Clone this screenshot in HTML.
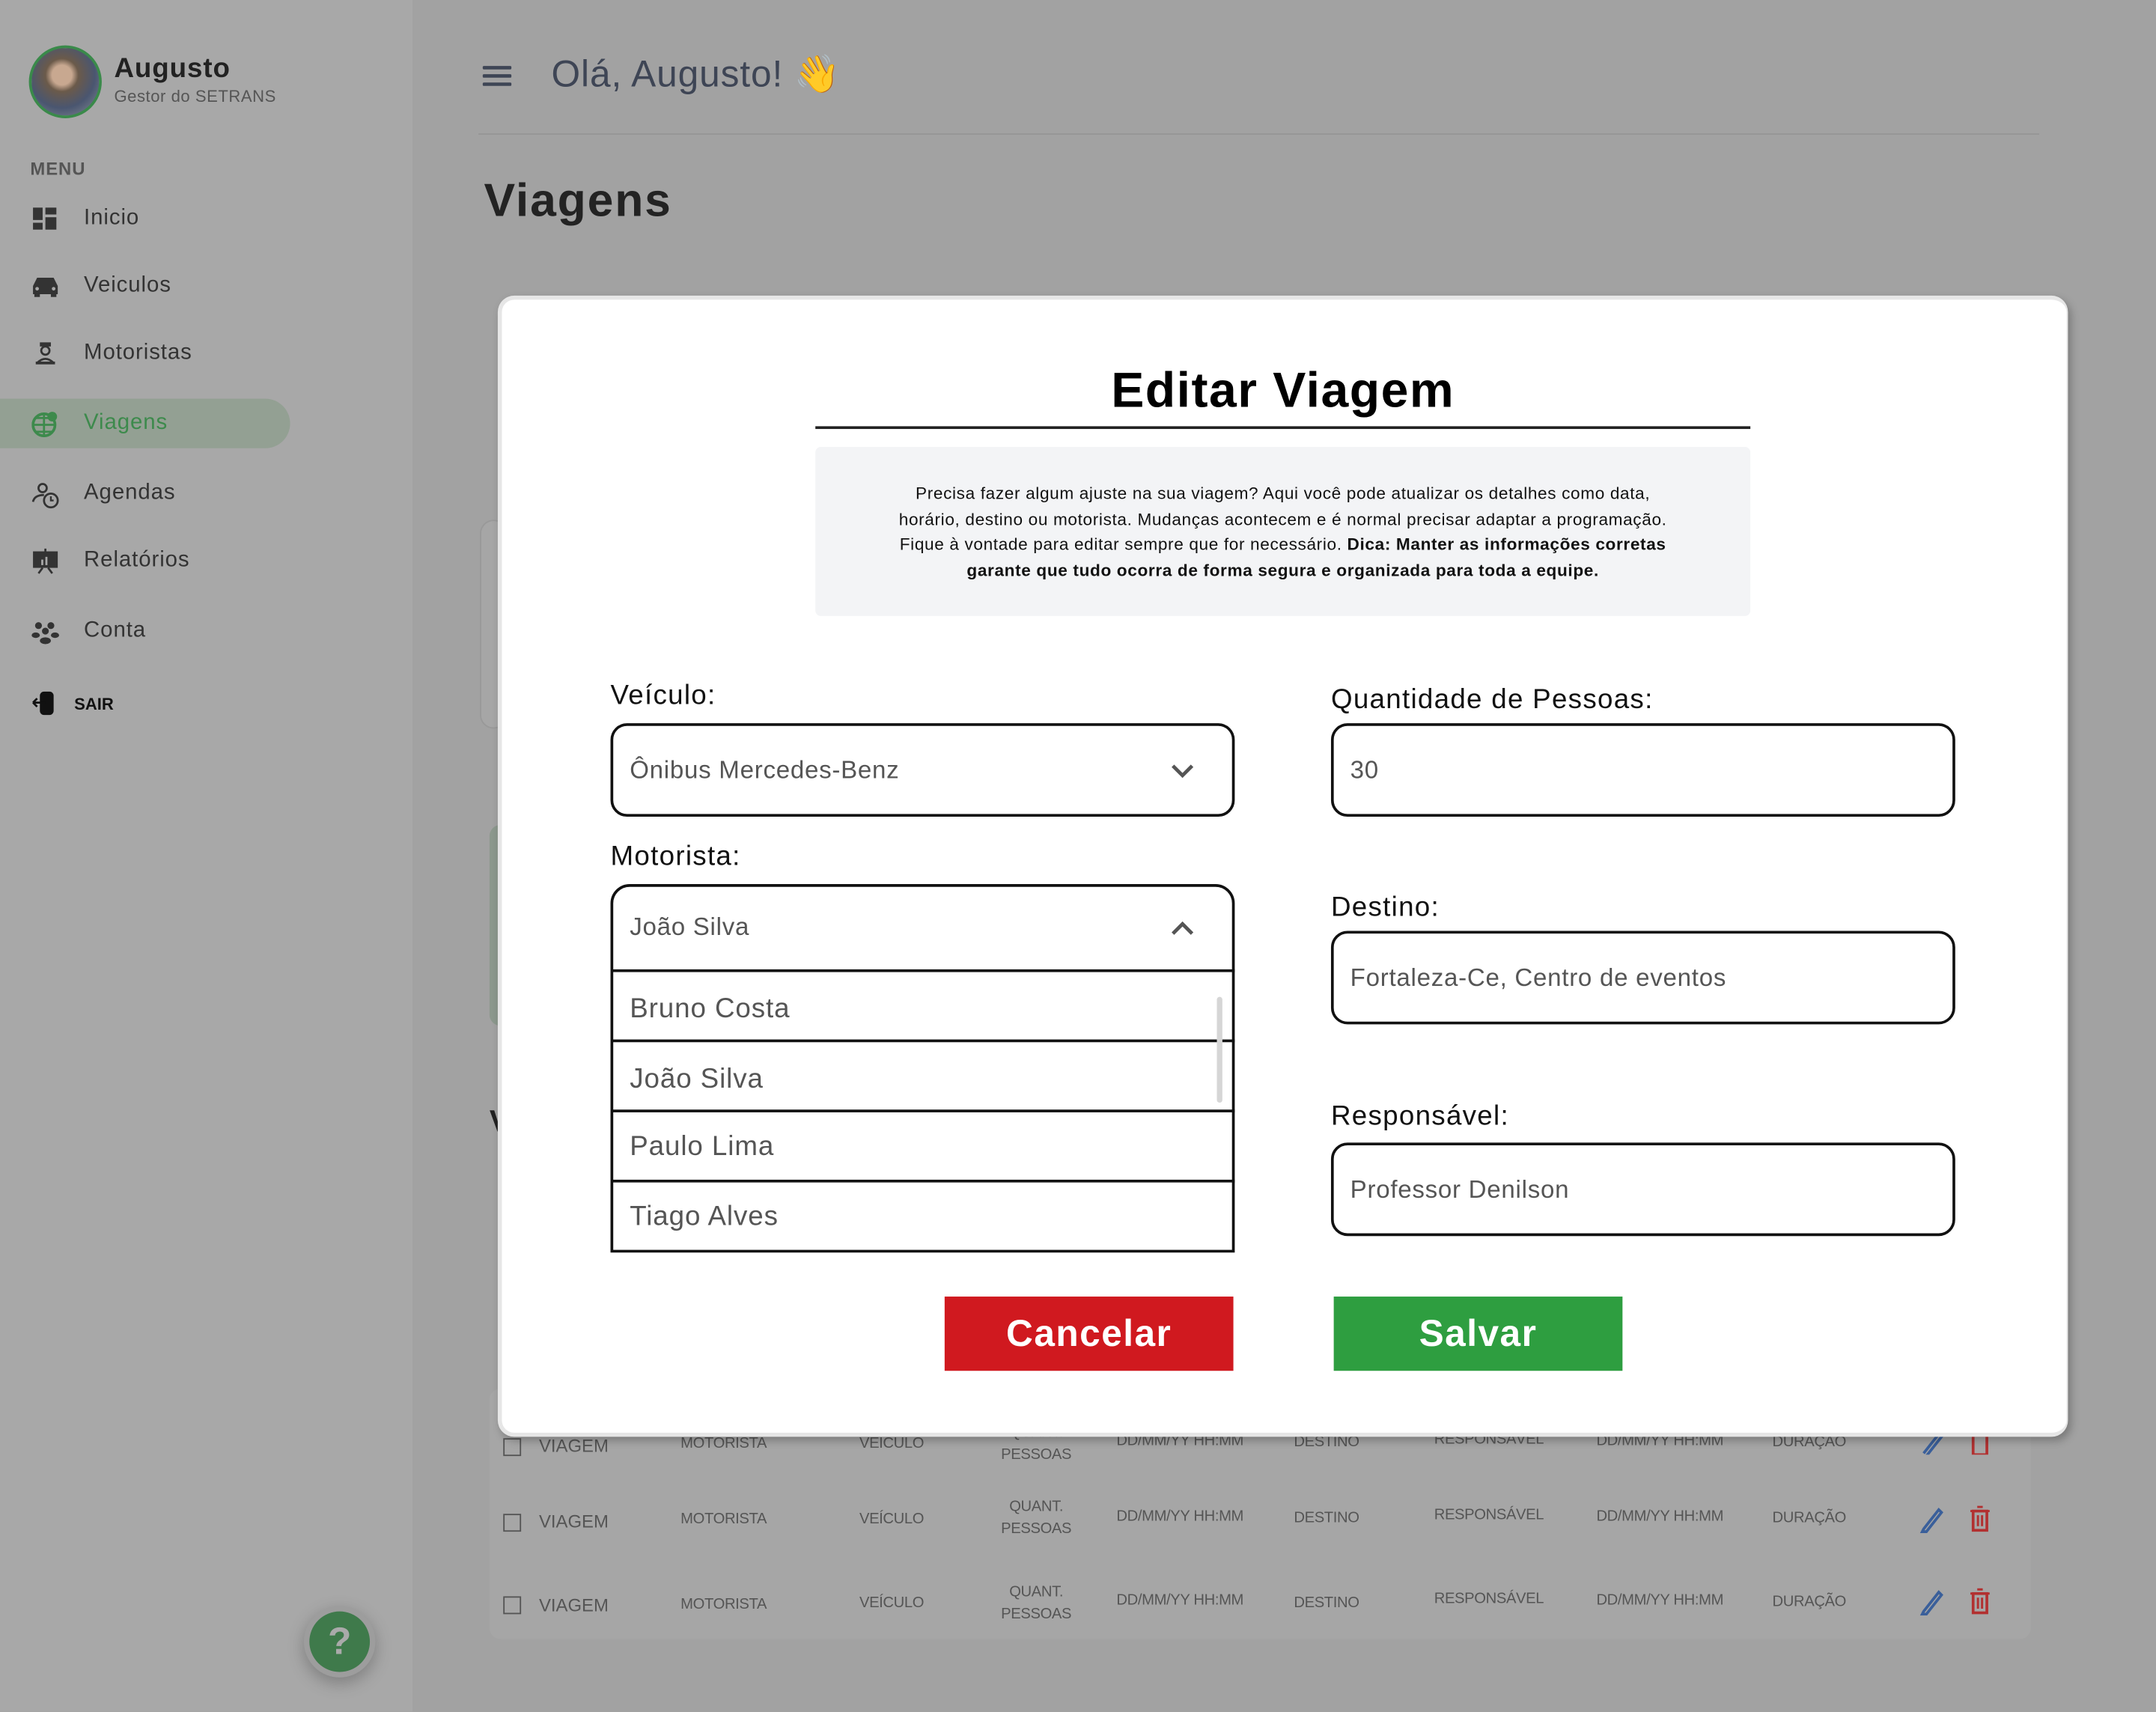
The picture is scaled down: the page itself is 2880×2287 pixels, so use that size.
<!DOCTYPE html>
<html><head><meta charset="utf-8">
<style>
*{margin:0;padding:0;box-sizing:border-box}
html,body{width:2880px;height:2286px;overflow:hidden;background:#a2a2a2}
#s{position:absolute;left:0;top:0;width:1568px;height:1245px;transform:scale(1.836735);transform-origin:0 0;font-family:"Liberation Sans",sans-serif;background:#a2a2a2}
.a{position:absolute;white-space:nowrap}
.side{left:0;top:0;width:300px;height:1245px;background:#a8a8a8}
.mi{left:61px;font-size:16px;color:#333;letter-spacing:.5px}
.ic{left:23px;width:20px;height:20px}
.td{font-size:11px;color:#555;letter-spacing:-.2px}
.lab{font-size:20px;color:#111;letter-spacing:.7px}
.box{border:2px solid #111;border-radius:12px;background:#fff}
.val{font-size:18px;color:#555;letter-spacing:.4px}
.opt{left:458px;font-size:20px;color:#555;letter-spacing:.5px}
.hl{left:445px;width:453px;height:2px;background:#111}
.cb{width:13px;height:13px;border:1.5px solid #555}
.q{text-align:center;line-height:16px}
</style></head><body><div id="s">
<div class="a side"></div>
<div class="a" style="left:21px;top:33px;width:53px;height:53px;border-radius:50%;border:2px solid #3a8a4a;background:radial-gradient(circle at 45% 40%,#c8a890 0 18%,#6b5a4a 30%,#4a5670 60%,#8a8f98 100%)"></div>
<div class="a" style="left:83px;top:39px;font-size:20px;font-weight:bold;color:#222;letter-spacing:.5px">Augusto</div>
<div class="a" style="left:83px;top:63px;font-size:12px;color:#555;letter-spacing:.3px">Gestor do SETRANS</div>
<div class="a" style="left:22px;top:115px;font-size:13px;font-weight:bold;color:#555;letter-spacing:.5px">MENU</div>
<svg class="a ic" style="top:150px" viewBox="0 0 20 20"><rect x="1" y="1" width="7" height="9" fill="#333"/><rect x="10" y="1" width="8" height="5" fill="#333"/><rect x="1" y="12" width="7" height="5" fill="#333"/><rect x="10" y="8" width="8" height="9" fill="#333"/></svg>
<div class="a mi" style="top:150px">Inicio</div>
<svg class="a ic" style="top:198px" viewBox="0 0 20 20"><path d="M1 10 L4 4 H16 L19 10 V16 H1Z" fill="#333"/><rect x="2" y="15" width="4" height="3" fill="#333"/><rect x="14" y="15" width="4" height="3" fill="#333"/><circle cx="4" cy="12" r="1.3" fill="#a8a8a8"/><circle cx="16" cy="12" r="1.3" fill="#a8a8a8"/></svg>
<div class="a mi" style="top:199px">Veiculos</div>
<svg class="a ic" style="top:247px" viewBox="0 0 20 20"><rect x="6" y="2" width="8" height="3" fill="#333"/><circle cx="10" cy="8" r="3" fill="none" stroke="#333" stroke-width="1.5"/><path d="M4 17 Q10 11 16 17" fill="none" stroke="#333" stroke-width="1.5"/><rect x="3" y="16" width="14" height="2" fill="#333"/></svg>
<div class="a mi" style="top:248px">Motoristas</div>
<div class="a" style="left:0;top:290px;width:211px;height:36px;background:#93a093;border-radius:0 18px 18px 0"></div>
<svg class="a ic" style="top:298px" viewBox="0 0 20 20"><circle cx="9" cy="11" r="8" fill="none" stroke="#3d8a4c" stroke-width="2"/><path d="M1 11 H17 M9 3 V19 M3 6 H15 M3 16 H15" stroke="#3d8a4c" stroke-width="1.5"/><circle cx="15" cy="5" r="3.5" fill="#3d8a4c"/></svg>
<div class="a mi" style="top:299px;color:#3d8a4c">Viagens</div>
<svg class="a ic" style="top:350px" viewBox="0 0 20 20"><circle cx="8" cy="5" r="3" fill="none" stroke="#333" stroke-width="1.5"/><path d="M1 15 Q2 10 9 10" fill="none" stroke="#333" stroke-width="1.5"/><circle cx="14" cy="14" r="5" fill="none" stroke="#333" stroke-width="1.5"/><path d="M14 11 V14 H16" stroke="#333" stroke-width="1.3" fill="none"/></svg>
<div class="a mi" style="top:350px">Agendas</div>
<svg class="a ic" style="top:398px" viewBox="0 0 20 20"><rect x="1" y="3" width="18" height="12" fill="#333"/><path d="M5 19 L8 15 M15 19 L12 15 M10 1 V3" stroke="#333" stroke-width="1.5"/><rect x="7" y="9" width="1.5" height="4" fill="#a8a8a8"/><rect x="10" y="7" width="1.5" height="6" fill="#a8a8a8"/></svg>
<div class="a mi" style="top:399px">Relatórios</div>
<svg class="a ic" style="top:450px" viewBox="0 0 20 20"><circle cx="5" cy="5" r="2.5" fill="#333"/><circle cx="14" cy="5" r="2.5" fill="#333"/><circle cx="10" cy="9" r="2.5" fill="#333"/><ellipse cx="3" cy="12" rx="3" ry="2" fill="#333"/><ellipse cx="17" cy="12" rx="3" ry="2" fill="#333"/><ellipse cx="10" cy="16" rx="4" ry="2.5" fill="#333"/></svg>
<div class="a mi" style="top:450px">Conta</div>
<svg class="a ic" style="top:502px" viewBox="0 0 20 20"><rect x="6" y="1" width="10" height="17" rx="3" fill="#111"/><path d="M1 9 H10 M1 9 L4 6 M1 9 L4 12" stroke="#111" stroke-width="1.5" fill="none"/></svg>
<div class="a" style="left:54px;top:505px;font-size:12px;font-weight:bold;color:#111">SAIR</div>
<div class="a" style="left:221px;top:1168px;width:52px;height:52px;border-radius:50%;background:#3f7a4b;border:4px solid #9d9d9d;box-shadow:0 4px 12px rgba(0,0,0,.25);color:#aaa;font-size:28px;font-weight:bold;text-align:center;line-height:44px">?</div>

<svg class="a" style="left:351px;top:47px" width="21" height="16"><rect y="1" width="21" height="2.5" rx="1" fill="#3e4555"/><rect y="7" width="21" height="2.5" rx="1" fill="#3e4555"/><rect y="13" width="21" height="2.5" rx="1" fill="#3e4555"/></svg>
<div class="a" style="left:401px;top:38px;font-size:27px;color:#3e4555;letter-spacing:.5px">Olá, Augusto! <span style="color:#c99a40">👋</span></div>
<div class="a" style="left:348px;top:97px;width:1135px;height:1px;background:#959595"></div>
<div class="a" style="left:352px;top:127px;font-size:34px;font-weight:bold;color:#232323;letter-spacing:1px">Viagens</div>
<div class="a" style="left:349px;top:378px;width:20px;height:152px;border-radius:10px;border:1px solid #999;background:#a6a6a6"></div>
<div class="a" style="left:356px;top:600px;width:20px;height:146px;border-radius:8px;background:#8c988d"></div>
<div class="a" style="left:356px;top:803px;font-size:22px;font-weight:bold;color:#222">V</div>
<div class="a" style="left:356px;top:1010px;width:1121px;height:182px;border-radius:8px;background:#a6a6a6"></div>

<div class="a cb" style="left:366px;top:1046px"></div>
<div class="a" style="left:392px;top:1044px;font-size:13px;color:#555">VIAGEM</div>
<div class="a td" style="left:495px;top:1044px">MOTORISTA</div>
<div class="a td" style="left:625px;top:1044px">VEÍCULO</div>
<div class="a td q" style="left:728px;top:1034px">QUANT.<br>PESSOAS</div>
<div class="a td" style="left:812px;top:1042px">DD/MM/YY HH:MM</div>
<div class="a td" style="left:941px;top:1043px">DESTINO</div>
<div class="a td" style="left:1043px;top:1041px">RESPONSÁVEL</div>
<div class="a td" style="left:1161px;top:1042px">DD/MM/YY HH:MM</div>
<div class="a td" style="left:1289px;top:1043px">DURAÇÃO</div>

<div class="a cb" style="left:366px;top:1101px"></div>
<div class="a" style="left:392px;top:1099px;font-size:13px;color:#555">VIAGEM</div>
<div class="a td" style="left:495px;top:1099px">MOTORISTA</div>
<div class="a td" style="left:625px;top:1099px">VEÍCULO</div>
<div class="a td q" style="left:728px;top:1088px">QUANT.<br>PESSOAS</div>
<div class="a td" style="left:812px;top:1097px">DD/MM/YY HH:MM</div>
<div class="a td" style="left:941px;top:1098px">DESTINO</div>
<div class="a td" style="left:1043px;top:1096px">RESPONSÁVEL</div>
<div class="a td" style="left:1161px;top:1097px">DD/MM/YY HH:MM</div>
<div class="a td" style="left:1289px;top:1098px">DURAÇÃO</div>
<svg class="a" style="left:1396px;top:1095px" width="18" height="20"><path d="M3 17 L14 3 L16 5 L5 19 L2 19Z" fill="none" stroke="#3a5f9a" stroke-width="2"/></svg>
<svg class="a" style="left:1432px;top:1095px" width="16" height="20"><rect x="3" y="4" width="10" height="14" fill="none" stroke="#b23030" stroke-width="2"/><path d="M1 4 H15 M6 1 H10 M6.5 7 V15 M9.5 7 V15" stroke="#b23030" stroke-width="1.6"/></svg>

<div class="a cb" style="left:366px;top:1161px"></div>
<div class="a" style="left:392px;top:1160px;font-size:13px;color:#555">VIAGEM</div>
<div class="a td" style="left:495px;top:1161px">MOTORISTA</div>
<div class="a td" style="left:625px;top:1160px">VEÍCULO</div>
<div class="a td q" style="left:728px;top:1150px">QUANT.<br>PESSOAS</div>
<div class="a td" style="left:812px;top:1158px">DD/MM/YY HH:MM</div>
<div class="a td" style="left:941px;top:1160px">DESTINO</div>
<div class="a td" style="left:1043px;top:1157px">RESPONSÁVEL</div>
<div class="a td" style="left:1161px;top:1158px">DD/MM/YY HH:MM</div>
<div class="a td" style="left:1289px;top:1159px">DURAÇÃO</div>
<svg class="a" style="left:1396px;top:1155px" width="18" height="20"><path d="M3 17 L14 3 L16 5 L5 19 L2 19Z" fill="none" stroke="#3a5f9a" stroke-width="2"/></svg>
<svg class="a" style="left:1432px;top:1155px" width="16" height="20"><rect x="3" y="4" width="10" height="14" fill="none" stroke="#b23030" stroke-width="2"/><path d="M1 4 H15 M6 1 H10 M6.5 7 V15 M9.5 7 V15" stroke="#b23030" stroke-width="1.6"/></svg>
<svg class="a" style="left:1396px;top:1040px" width="18" height="18"><path d="M3 17 L14 3 L16 5 L5 19" fill="none" stroke="#3a5f9a" stroke-width="2"/></svg>
<svg class="a" style="left:1432px;top:1040px" width="16" height="18"><rect x="3" y="4" width="10" height="14" fill="none" stroke="#b23030" stroke-width="2"/></svg>

<div class="a" style="left:362px;top:215px;width:1142px;height:830px;border-radius:12px;background:#fff;border:3px solid #e6e6e6;border-right-width:1px;box-shadow:2px 3px 6px rgba(0,0,0,.25)"></div>
<div class="a" style="left:593px;top:263px;width:680px;text-align:center;font-size:36px;font-weight:bold;color:#000;letter-spacing:.8px">Editar Viagem</div>
<div class="a" style="left:593px;top:310px;width:680px;height:2px;background:#222"></div>
<div class="a" style="left:593px;top:325px;width:680px;height:123px;background:#f3f4f6;border-radius:4px"></div>
<div class="a" style="left:583px;top:350px;width:700px;text-align:center;font-size:12.3px;line-height:18.7px;color:#111;white-space:normal;letter-spacing:.35px">Precisa fazer algum ajuste na sua viagem? Aqui você pode atualizar os detalhes como data,<br>horário, destino ou motorista. Mudanças acontecem e é normal precisar adaptar a programação.<br>Fique à vontade para editar sempre que for necessário. <b>Dica: Manter as informações corretas<br>garante que tudo ocorra de forma segura e organizada para toda a equipe.</b></div>

<div class="a lab" style="left:444px;top:495px">Veículo:</div>
<div class="a box" style="left:444px;top:526px;width:454px;height:68px"></div>
<div class="a val" style="left:458px;top:550px">Ônibus Mercedes-Benz</div>
<svg class="a" style="left:851px;top:555px" width="18" height="12"><path d="M2 2 L9 9 L16 2" stroke="#555" stroke-width="2.6" fill="none"/></svg>
<div class="a lab" style="left:968px;top:498px">Quantidade de Pessoas:</div>
<div class="a box" style="left:968px;top:526px;width:454px;height:68px"></div>
<div class="a val" style="left:982px;top:550px">30</div>

<div class="a lab" style="left:444px;top:612px">Motorista:</div>
<div class="a" style="left:444px;top:643px;width:454px;height:268px;border:2px solid #111;border-radius:14px 14px 0 0;background:#fff"></div>
<div class="a val" style="left:458px;top:664px">João Silva</div>
<svg class="a" style="left:851px;top:669px" width="18" height="12"><path d="M2 10 L9 3 L16 10" stroke="#555" stroke-width="2.6" fill="none"/></svg>
<div class="a hl" style="top:705px"></div>
<div class="a hl" style="top:756px"></div>
<div class="a hl" style="top:807px"></div>
<div class="a hl" style="top:858px"></div>
<div class="a" style="left:885px;top:725px;width:4px;height:77px;border-radius:2px;background:#d6d6d6"></div>
<div class="a opt" style="top:723px">Bruno Costa</div>
<div class="a opt" style="top:774px">João Silva</div>
<div class="a opt" style="top:823px">Paulo Lima</div>
<div class="a opt" style="top:874px">Tiago Alves</div>

<div class="a lab" style="left:968px;top:649px">Destino:</div>
<div class="a box" style="left:968px;top:677px;width:454px;height:68px"></div>
<div class="a val" style="left:982px;top:701px">Fortaleza-Ce, Centro de eventos</div>
<div class="a lab" style="left:968px;top:801px">Responsável:</div>
<div class="a box" style="left:968px;top:831px;width:454px;height:68px"></div>
<div class="a val" style="left:982px;top:855px">Professor Denilson</div>

<div class="a" style="left:687px;top:943px;width:210px;height:54px;background:#d0191f;color:#fff;font-size:27px;font-weight:bold;text-align:center;line-height:54px;letter-spacing:.8px">Cancelar</div>
<div class="a" style="left:970px;top:943px;width:210px;height:54px;background:#2e9e40;color:#fff;font-size:27px;font-weight:bold;text-align:center;line-height:54px;letter-spacing:.8px">Salvar</div>
</div>
</body></html>
